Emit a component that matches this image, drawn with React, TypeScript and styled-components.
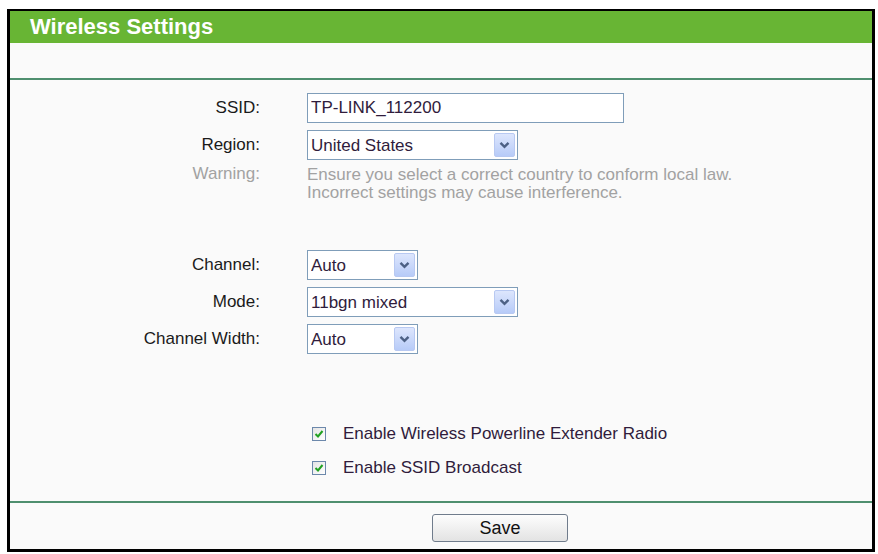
import React, { useState } from 'react';
import styled, { createGlobalStyle } from 'styled-components';

const GlobalStyle = createGlobalStyle`
    body {
        margin: 0;
        background: #ffffff;
        font-family: "Liberation Sans", Arial, sans-serif;
    }
`

const Frame = styled.div`
    margin: 9px 0 0 7px;
    width: 868px;
    height: 543px;
    box-sizing: border-box;
    border: 3px solid #000;
    border-top-width: 2px;
    background: #fafafa;
    display: flex;
    flex-flow: column nowrap;
`

const Header = styled.div`
    height: 32px;
    background: #68b534;
    color: #fff;
    font-size: 22px;
    font-weight: bold;
    padding-left: 20px;
    display: flex;
    align-items: center;
`

const Intro = styled.div`
    height: 35px;
    border-bottom: 2px solid #4f8f6f;
`

const Form = styled.div`
    height: 421px;
    border-bottom: 2px solid #4f8f6f;
    display: flex;
    flex-flow: column nowrap;
`

const Row = styled.div<{ $top: number; $start?: boolean }>`
    display: grid;
    grid-template-columns: 250px 1fr;
    column-gap: 47px;
    align-items: ${p => (p.$start ? 'start' : 'center')};
    margin-top: ${p => p.$top}px;
`

const Label = styled.div<{ $muted?: boolean }>`
    text-align: right;
    font-size: 17px;
    line-height: 18px;
    color: ${p => (p.$muted ? '#a2a2a2' : '#1a1a1a')};
`

const Note = styled.div`
    font-size: 17px;
    line-height: 18px;
    margin-top: 1px;
    color: #a2a2a2;
`

const TextInput = styled.input`
    width: 317px;
    height: 30px;
    box-sizing: border-box;
    border: 1px solid #7f9db9;
    background: #fff;
    padding: 0 3px;
    font-family: inherit;
    font-size: 17px;
    color: #301c3c;
    outline: none;
`

const SelectBox = styled.div<{ $w: number }>`
    width: ${p => p.$w}px;
    height: 30px;
    box-sizing: border-box;
    border: 1px solid #7f9db9;
    background: #fff;
    display: flex;
    align-items: stretch;
    padding: 2px;
`

const NativeSelect = styled.select`
    flex: 1;
    min-width: 0;
    appearance: none;
    border: none;
    background: transparent;
    padding: 0 1px;
    font-family: inherit;
    font-size: 17px;
    color: #301c3c;
    outline: none;
`

const ArrowButton = styled.span`
    width: 21px;
    box-sizing: border-box;
    border: 1px solid #b8c9f2;
    border-radius: 2px;
    background: linear-gradient(#dde6fd, #b7cbf8);
    display: flex;
    align-items: center;
    justify-content: center;
`

const CheckRow = styled.label`
    display: flex;
    align-items: center;
    gap: 17px;
    height: 20px;
    padding-left: 5px;
    font-size: 17px;
    color: #301c3c;
    cursor: pointer;
`

const Box = styled.span`
    width: 14px;
    height: 14px;
    box-sizing: border-box;
    border: 1px solid #6c88ab;
    background: linear-gradient(135deg, #e4e4e4, #ffffff);
    display: flex;
    align-items: center;
    justify-content: center;
`

const Footer = styled.div`
    flex: 1;
    padding: 11px 0 0 422px;
`

const SaveButton = styled.button`
    width: 136px;
    height: 28px;
    border: 1px solid #707c8c;
    border-radius: 3px;
    background: linear-gradient(#fdfdfd, #e3e3e3);
    font-family: inherit;
    font-size: 18px;
    color: #111;
    cursor: pointer;
`

const Chevron = () => (
    <svg width="11" height="8" viewBox="0 0 11 8">
        <polyline points="1.5,1.8 5.5,5.8 9.5,1.8" fill="none" stroke="#4d6185" strokeWidth="2.4" />
    </svg>
)

const Tick = () => (
    <svg width="10" height="10" viewBox="0 0 10 10">
        <polyline points="1.5,5 4,7.5 8.5,2" fill="none" stroke="#21a121" strokeWidth="2" />
    </svg>
)

const Select = ({ width, value, options }: { width: number; value: string; options: string[] }) => {
    const [current, setCurrent] = useState(value);
    return (
        <SelectBox $w={width}>
            <NativeSelect value={current} onChange={e => setCurrent(e.target.value)}>
                {options.map(o => <option key={o}>{o}</option>)}
            </NativeSelect>
            <ArrowButton><Chevron /></ArrowButton>
        </SelectBox>
    )
}

const Check = ({ text }: { text: string }) => {
    const [on, setOn] = useState(true);
    return (
        <CheckRow onClick={() => setOn(!on)}>
            <Box>{on && <Tick />}</Box>
            {text}
        </CheckRow>
    )
}

function App() {
    return (
        <>
            <GlobalStyle />
            <Frame>
                <Header>Wireless Settings</Header>
                <Intro />
                <Form>
                    <Row $top={13}>
                        <Label>SSID:</Label>
                        <TextInput defaultValue="TP-LINK_112200" />
                    </Row>
                    <Row $top={7}>
                        <Label>Region:</Label>
                        <Select width={211} value="United States" options={['United States', 'Canada', 'Mexico']} />
                    </Row>
                    <Row $top={5} $start>
                        <Label $muted>Warning:</Label>
                        <Note>
                            Ensure you select a correct country to conform local law.<br />
                            Incorrect settings may cause interference.
                        </Note>
                    </Row>
                    <Row $top={48}>
                        <Label>Channel:</Label>
                        <Select width={111} value="Auto" options={['Auto', '1', '6', '11']} />
                    </Row>
                    <Row $top={7}>
                        <Label>Mode:</Label>
                        <Select width={211} value="11bgn mixed" options={['11bgn mixed', '11bg mixed', '11n only']} />
                    </Row>
                    <Row $top={7}>
                        <Label>Channel Width:</Label>
                        <Select width={111} value="Auto" options={['Auto', '20MHz', '40MHz']} />
                    </Row>
                    <Row $top={70}>
                        <span />
                        <Check text="Enable Wireless Powerline Extender Radio" />
                    </Row>
                    <Row $top={14}>
                        <span />
                        <Check text="Enable SSID Broadcast" />
                    </Row>
                </Form>
                <Footer>
                    <SaveButton>Save</SaveButton>
                </Footer>
            </Frame>
        </>
    )
}

export default App
